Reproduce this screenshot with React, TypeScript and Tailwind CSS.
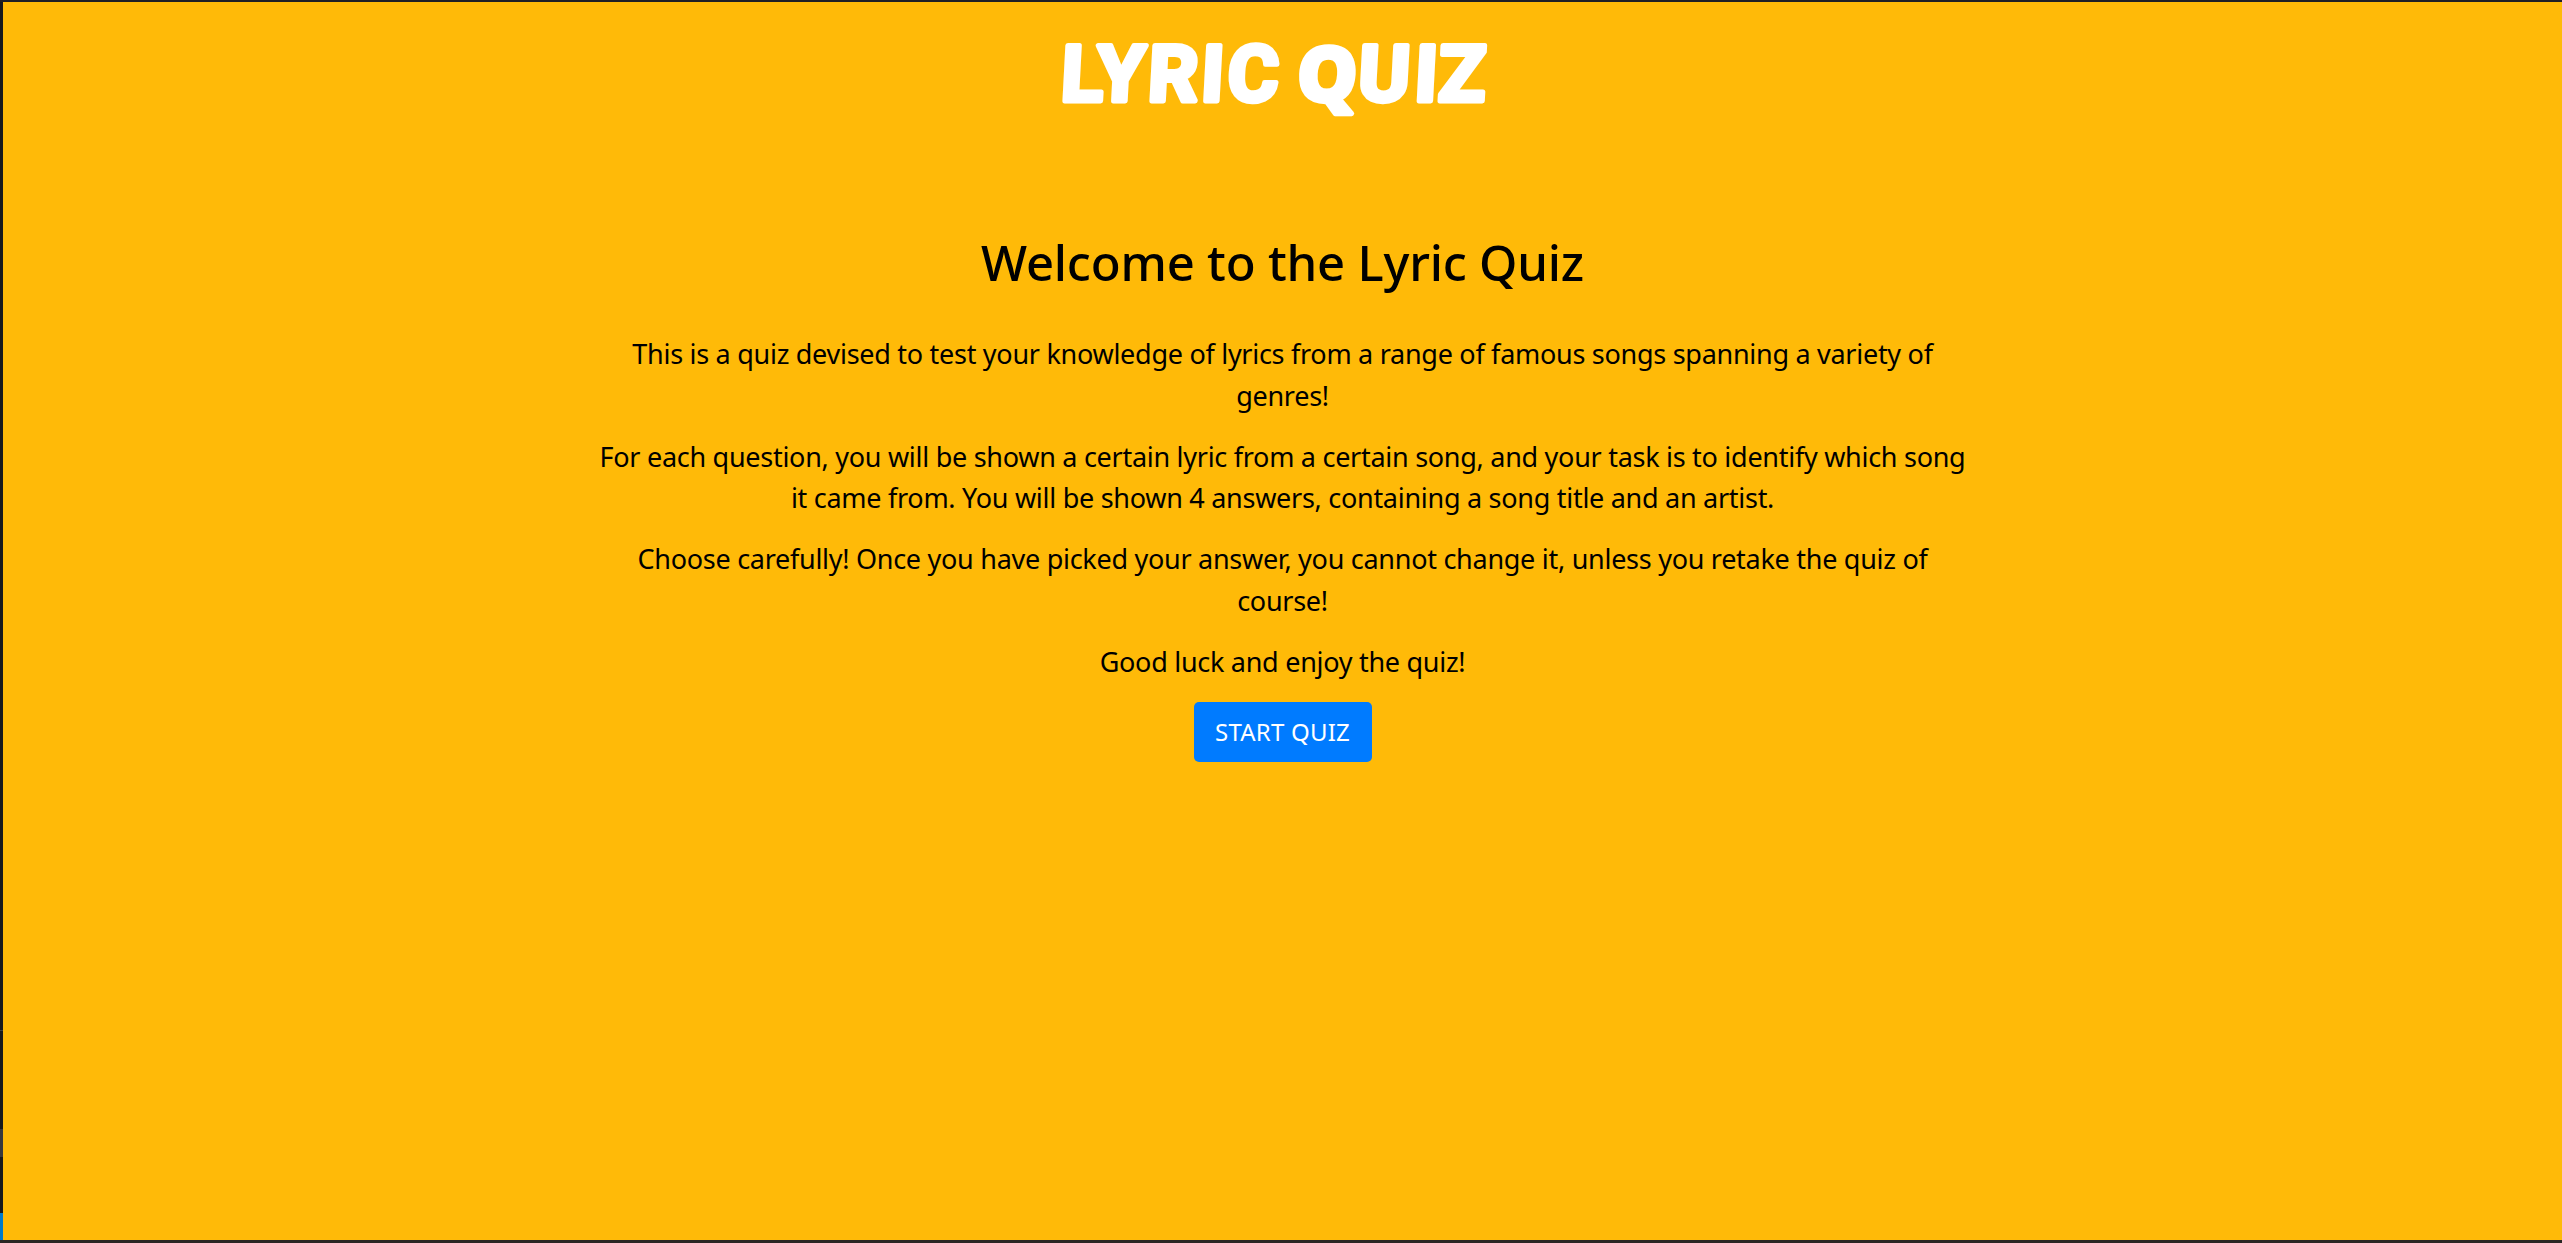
const paragraphs: string[][] = [
  [
    'This is a quiz devised to test your knowledge of lyrics from a range of famous songs spanning a variety of',
    'genres!',
  ],
  [
    'For each question, you will be shown a certain lyric from a certain song, and your task is to identify which song',
    'it came from. You will be shown 4 answers, containing a song title and an artist.',
  ],
  [
    'Choose carefully! Once you have picked your answer, you cannot change it, unless you retake the quiz of',
    'course!',
  ],
  ['Good luck and enjoy the quiz!'],
];

function Wordmark() {
  return (
    <svg width="460" height="100" viewBox="1045 30 460 100" role="img" aria-label="Lyric Quiz">
      <text
        transform="translate(0 100.5) skewX(-3)"
        x="1081 1119.5 1172 1211.5 1252 1290 1326 1383 1425 1461"
        y="0"
        textAnchor="middle"
        strokeWidth="5"
        strokeLinejoin="round"
        className="fill-white stroke-white font-['Roboto',sans-serif] text-[78px] font-bold"
      >
        LYRIC <tspan className="font-['Noto_Sans',sans-serif] text-[75px] font-extrabold">Q</tspan>UIZ
      </text>
    </svg>
  );
}

function WindowEdge() {
  return (
    <div className="flex w-[3px] shrink-0 flex-col bg-[#17181c]">
      <div className="mt-[1028px] h-px bg-[#3c3d42]" />
      <div className="mt-[98px] h-7 bg-[#37373d]" />
      <div className="mt-auto h-[27px] bg-[#007acc]" />
    </div>
  );
}

export default function App() {
  return (
    <div className="flex h-[1243px] w-[2562px] flex-col overflow-hidden border-t-2 border-b-3 border-t-[#1f1f26] border-b-[#2a2623] bg-[#ffba08] font-['Noto_Sans',sans-serif] text-black">
      <div className="flex flex-1">
        <WindowEdge />
        <main className="flex flex-1 flex-col items-center text-center">
          <h1 className="mt-7 mr-[15px] h-[100px]">
            <Wordmark />
          </h1>
          <h2 className="mt-[97px] text-[49px] leading-[70px] font-medium tracking-[-0.2px] whitespace-nowrap">
            Welcome to the Lyric Quiz
          </h2>
          <div className="mt-9 flex flex-col gap-[19.3px] text-[27px] leading-[41.7px] tracking-[-0.28px] whitespace-nowrap">
            {paragraphs.map((lines) => (
              <p key={lines[0]}>
                {lines.map((line) => (
                  <span key={line} className="block">
                    {line}
                  </span>
                ))}
              </p>
            ))}
          </div>
          <button className="mt-[19px] flex h-[60px] w-[178px] items-center justify-center rounded-[5px] bg-[#007bff] text-2xl tracking-[0.2px] text-white">
            START QUIZ
          </button>
        </main>
      </div>
    </div>
  );
}
